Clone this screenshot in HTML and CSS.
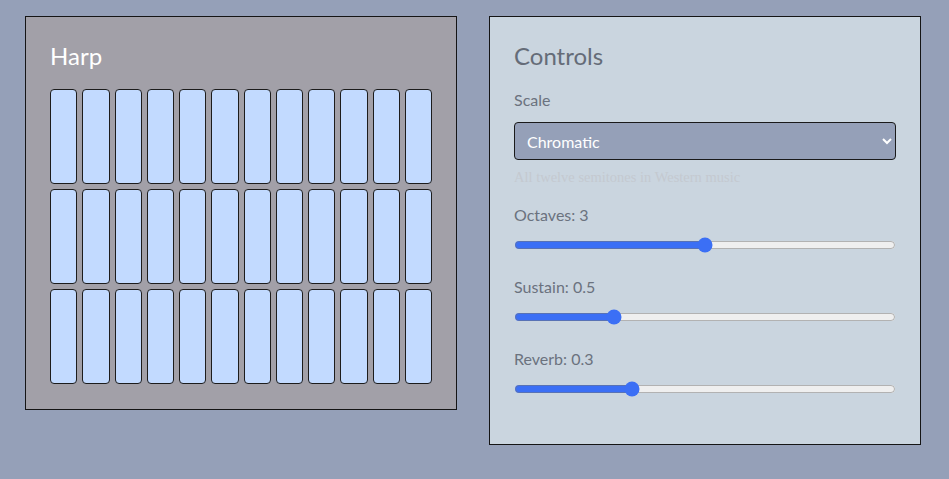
FILE: index.html
```html
<!DOCTYPE html>
<html lang="en">
<head>
<meta charset="utf-8">
<title>Harp</title>
<link rel="stylesheet" href="styles.css">
</head>
<body>
<main class="app">
  <section class="panel harp">
    <h2 class="panel-title">Harp</h2>
    <div class="strings">
      <div class="string"></div><div class="string"></div><div class="string"></div><div class="string"></div>
      <div class="string"></div><div class="string"></div><div class="string"></div><div class="string"></div>
      <div class="string"></div><div class="string"></div><div class="string"></div><div class="string"></div>
      <div class="string"></div><div class="string"></div><div class="string"></div><div class="string"></div>
      <div class="string"></div><div class="string"></div><div class="string"></div><div class="string"></div>
      <div class="string"></div><div class="string"></div><div class="string"></div><div class="string"></div>
      <div class="string"></div><div class="string"></div><div class="string"></div><div class="string"></div>
      <div class="string"></div><div class="string"></div><div class="string"></div><div class="string"></div>
      <div class="string"></div><div class="string"></div><div class="string"></div><div class="string"></div>
    </div>
  </section>
  <section class="panel controls">
    <h2 class="panel-title">Controls</h2>
    <label class="label" for="scale">Scale</label>
    <select id="scale" class="select">
      <option>Chromatic</option>
      <option>Major</option>
      <option>Minor</option>
      <option>Pentatonic</option>
    </select>
    <p class="hint">All twelve semitones in Western music</p>
    <div class="field">
      <label class="label" for="octaves">Octaves: 3</label>
      <input id="octaves" class="range" type="range" min="1" max="5" step="1" value="3">
    </div>
    <div class="field">
      <label class="label" for="sustain">Sustain: 0.5</label>
      <input id="sustain" class="range" type="range" min="0" max="2" step="0.1" value="0.5">
    </div>
    <div class="field">
      <label class="label" for="reverb">Reverb: 0.3</label>
      <input id="reverb" class="range" type="range" min="0" max="1" step="0.1" value="0.3">
    </div>
  </section>
</main>
</body>
</html>
```
FILE: styles.css
```css
html, body {
  margin: 0;
  padding: 0;
}
body {
  background: #95a0b8;
  font-family: "Lato", "Noto Sans", sans-serif;
}
.app {
  display: grid;
  grid-template-columns: 432px 432px;
  column-gap: 32px;
  align-items: start;
  padding: 16px 0 0 25px;
}
.panel {
  border: 1px solid #151515;
  padding: 24px;
}
.harp {
  background: #a2a0a8;
  padding-bottom: 25px;
}
.controls {
  background: #cad5df;
  padding-bottom: 47px;
}
.panel-title {
  margin: 0 0 19px;
  font-size: 24px;
  line-height: 29px;
  font-weight: 400;
}
.harp .panel-title {
  color: #ffffff;
}
.controls .panel-title {
  color: #656c78;
  margin-bottom: 20px;
}
.strings {
  display: grid;
  grid-template-columns: repeat(12, 1fr);
  grid-auto-rows: 95px;
  gap: 5px;
}
.string {
  background: #c2daff;
  border: 1px solid #1c1c1c;
  border-radius: 4px;
}
.label {
  display: block;
  font-size: 16px;
  line-height: 19px;
  color: #6b727e;
}
.select {
  display: block;
  width: 100%;
  height: 38px;
  margin-top: 13px;
  padding: 0 8px 0 8px;
  background: #95a0b8;
  color: #ffffff;
  border: 1px solid #1a1a1a;
  border-radius: 4px;
  font-family: "Lato", "Noto Sans", sans-serif;
  font-size: 16px;
}
.hint {
  margin: 9px 0 0;
  font-family: "Liberation Serif", serif;
  font-size: 14.5px;
  line-height: 16px;
  color: #c4c9d0;
}
.field {
  margin-top: 20px;
}
.field + .field {
  margin-top: 24px;
}
.range {
  display: block;
  width: 100%;
  height: 16px;
  margin: 13px 0 0;
  accent-color: #3b6ff5;
}
```
